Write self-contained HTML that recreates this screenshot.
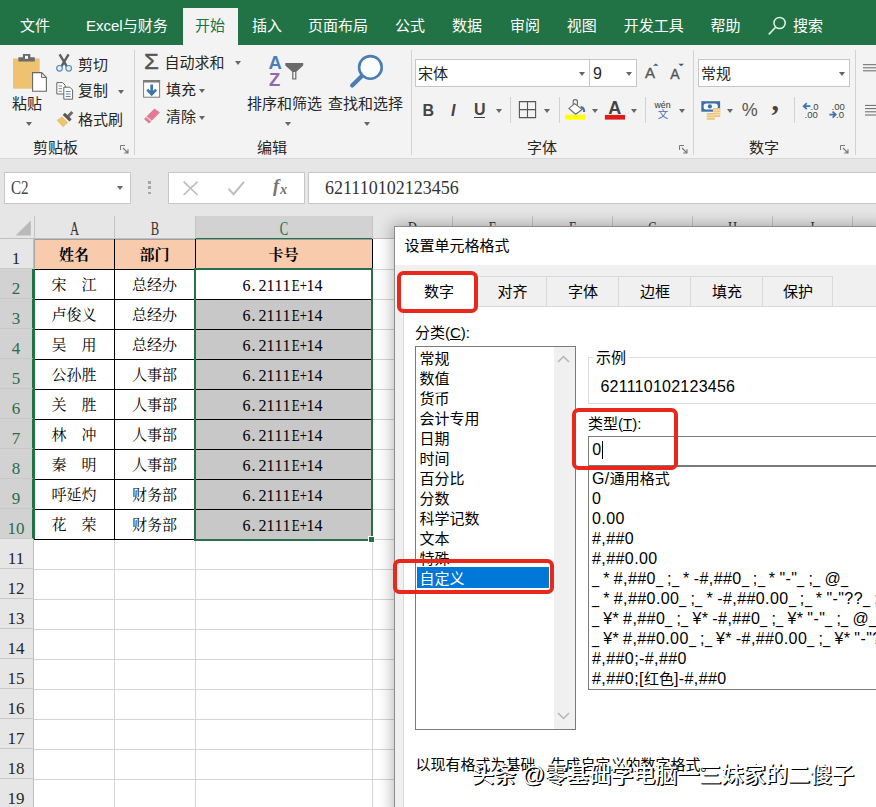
<!DOCTYPE html>
<html lang="zh-CN">
<head>
<meta charset="utf-8">
<title>Excel</title>
<style>
*{box-sizing:border-box;margin:0;padding:0}
html,body{width:876px;height:807px;overflow:hidden;background:#fff}
body{position:relative;font-family:"Liberation Sans","Noto Sans CJK SC",sans-serif;font-size:15px;color:#262626}
div,span,svg{position:absolute}
.t{white-space:nowrap;line-height:1}
svg{overflow:visible}
#tabbar{left:0;top:0;width:876px;height:45px;background:#217346}
#tabbar .t{color:#fff;font-size:15px;top:18px}
#acttab{left:183px;top:8px;width:55px;height:38px;background:#f3f3f3}
#ribbon{left:0;top:45px;width:876px;height:114px;background:#f3f3f3;border-bottom:1px solid #d8d8d8}
#ribbon .t{font-size:15px;color:#262626}
.vs{width:1px;background:#d2d2d2}
.dd{width:0;height:0;border-left:3.5px solid transparent;border-right:3.5px solid transparent;border-top:4px solid #666}
.box{background:#fff;border:1px solid #c6c6c6}
#fbar{left:0;top:159px;width:876px;height:57px;background:#e6e6e6}
#sheet{left:0;top:216px;width:876px;height:591px;background:#fff;overflow:hidden}
.ser{font-family:"Liberation Serif","Noto Serif CJK SC",serif}
.cs{font-family:"Liberation Serif","Noto Serif CJK SC",serif;font-size:15px;color:#000;text-align:center}
.mono i{display:inline-block;font-style:normal;width:8px;text-align:center}
.mono i.n{transform:scaleX(.8)}
.hl{height:1px;background:#d4d4d4}
.vl{width:1px;background:#d4d4d4}
.ch{top:0;height:23px;font-family:"Liberation Serif",serif;font-size:16px;color:#333;text-align:center;line-height:1}
.rh{left:0;width:34px;height:30px;font-family:"Liberation Serif",serif;font-size:16px;color:#262626;text-align:center;line-height:1;border-bottom:1px solid #c9c9c9}
.rh.sel{background:#d2d2d2;color:#2d6a4a;border-right:2px solid #217346}
.rh span{left:-1px;width:34px;top:11.3px;text-align:center;font-size:17px}
#dlg{left:394px;top:226px;width:490px;height:590px;background:#f0f0f0;border:1px solid #8c8c8c;box-shadow:0 0 14px 2px rgba(0,0,0,.27)}
#dlg .t{font-size:15px;color:#000}
.red{border:4px solid #e8281b;border-radius:6.5px}
.li{left:4px;white-space:nowrap;line-height:1;font-size:15px;color:#000}
.fl{left:4px;white-space:nowrap;line-height:1;font-size:16px;color:#000;letter-spacing:.42px;word-spacing:-.9px}
.fl i{display:inline-block;font-style:normal;width:7.2px;transform:scaleX(.8);transform-origin:0 50%;letter-spacing:0}
.fl b{font-weight:normal;font-size:15px;letter-spacing:0}
</style>
</head>
<body>
<div id="tabbar"><div id="acttab"></div><span class="t" style="left:20px">文件</span><span class="t" style="left:86px">Excel与财务</span><span class="t" style="left:195px;color:#217346">开始</span><span class="t" style="left:252px">插入</span><span class="t" style="left:308px">页面布局</span><span class="t" style="left:395px">公式</span><span class="t" style="left:452px">数据</span><span class="t" style="left:510px">审阅</span><span class="t" style="left:566.8px">视图</span><span class="t" style="left:623.8px">开发工具</span><span class="t" style="left:710.5px">帮助</span><span class="t" style="left:793px">搜索</span><svg style="left:766px;top:14px" width="24" height="24" viewBox="0 0 24 24"><circle cx="13.6" cy="9" r="5.6" fill="none" stroke="#e2f3e8" stroke-width="1.5"/><path d="M9.6 13.2 L2.8 20.4" stroke="#e2f3e8" stroke-width="1.6" fill="none"/></svg></div>
<div id="ribbon"><span class="t" style="left:12px;top:51.0px">粘贴</span><div class="dd" style="left:25.5px;top:76.5px"></div><span class="t" style="left:78px;top:11.799999999999997px">剪切</span><span class="t" style="left:78px;top:38.0px">复制</span><div class="dd" style="left:117.5px;top:44.5px"></div><span class="t" style="left:78px;top:66.8px">格式刷</span><span class="t" style="left:33px;top:94.9px">剪贴板</span><svg style="left:120px;top:100px" width="9" height="9" viewBox="0 0 9 9"><path d="M0.5 5 V0.5 H5" fill="none" stroke="#777" stroke-width="1"/><path d="M3 3 L7.5 7.5 M4.2 8 H8 V4.2" fill="none" stroke="#777" stroke-width="1.1"/></svg><div class="vs" style="left:134px;top:5px;height:105px"></div><span class="t" style="left:164.5px;top:10.0px">自动求和</span><div class="dd" style="left:234.5px;top:15.5px"></div><span class="t" style="left:166px;top:36.8px">填充</span><div class="dd" style="left:198.5px;top:43.5px"></div><span class="t" style="left:166px;top:64.0px">清除</span><div class="dd" style="left:198.5px;top:70.5px"></div><span class="t" style="left:247px;top:50.5px">排序和筛选</span><div class="dd" style="left:284.8px;top:76.5px"></div><span class="t" style="left:328px;top:50.5px">查找和选择</span><div class="dd" style="left:364.3px;top:76.5px"></div><span class="t" style="left:257px;top:95.0px">编辑</span><div class="vs" style="left:411px;top:5px;height:105px"></div><div class="box" style="left:415px;top:14px;width:175px;height:28px"></div><div class="box" style="left:589px;top:14px;width:48px;height:28px"></div><span class="t" style="left:418px;top:21.0px">宋体</span><div class="dd" style="left:578.5px;top:26.5px"></div><span class="t" style="left:593px;top:21.0px;font-size:16px">9</span><div class="dd" style="left:625.5px;top:26.5px"></div><span class="t" style="left:527px;top:94.9px">字体</span><svg style="left:679px;top:100px" width="9" height="9" viewBox="0 0 9 9"><path d="M0.5 5 V0.5 H5" fill="none" stroke="#777" stroke-width="1"/><path d="M3 3 L7.5 7.5 M4.2 8 H8 V4.2" fill="none" stroke="#777" stroke-width="1.1"/></svg><div class="vs" style="left:510px;top:52px;height:26px"></div><div class="vs" style="left:559px;top:52px;height:26px"></div><div class="vs" style="left:645px;top:52px;height:26px"></div><div class="dd" style="left:495.5px;top:63.5px"></div><div class="dd" style="left:543.5px;top:63.5px"></div><div class="dd" style="left:591.5px;top:63.5px"></div><div class="dd" style="left:630.5px;top:63.5px"></div><div class="dd" style="left:678.5px;top:63.5px"></div><div class="vs" style="left:693px;top:5px;height:105px"></div><div class="box" style="left:698px;top:14px;width:152px;height:28px"></div><span class="t" style="left:701px;top:21.0px">常规</span><div class="dd" style="left:838.5px;top:26.5px"></div><div class="dd" style="left:726.5px;top:63.5px"></div><span class="t" style="left:749px;top:94.9px">数字</span><svg style="left:840px;top:100px" width="9" height="9" viewBox="0 0 9 9"><path d="M0.5 5 V0.5 H5" fill="none" stroke="#777" stroke-width="1"/><path d="M3 3 L7.5 7.5 M4.2 8 H8 V4.2" fill="none" stroke="#777" stroke-width="1.1"/></svg><div class="vs" style="left:794px;top:52px;height:26px"></div><div class="vs" style="left:855px;top:5px;height:105px"></div><span class="t" style="left:144px;top:6.5px;font-size:21.5px;color:#555;-webkit-text-stroke:.45px #555;transform:scaleX(1.12);transform-origin:0 0">Σ</span><span class="t" style="left:268.4px;top:9.200000000000003px;font-size:18.5px;color:#4b7fb5;font-weight:bold">A</span><span class="t" style="left:269.1px;top:26.299999999999997px;font-size:18.5px;color:#9467ac;font-weight:bold">Z</span><span class="t" style="left:422.5px;top:57.5px;font-size:16px;color:#444;font-weight:bold">B</span><span class="t" style="left:451px;top:57.5px;font-size:16px;color:#444;font-weight:bold;font-style:italic">I</span><span class="t" style="left:474px;top:57px;font-size:16px;color:#444;font-weight:bold">U</span><div style="left:474px;top:72px;width:11px;height:1px;background:#444"></div><span class="t" style="left:608.3px;top:53.599999999999994px;font-size:18px;color:#444;font-weight:bold">A</span><span class="t" style="left:645px;top:20px;font-size:15px;color:#555;-webkit-text-stroke:.35px #555">A</span><span class="t" style="left:670.3px;top:21.5px;font-size:14px;color:#555;-webkit-text-stroke:.35px #555">A</span><span class="t" style="left:654.5px;top:55.8px;font-size:8.8px;color:#333">wén</span><span class="t" style="left:657.8px;top:64px;font-size:10.5px;color:#4472c4">文</span><span class="t" style="left:741.8px;top:55.5px;font-size:18px;color:#555">%</span><span class="t" style="left:771.5px;top:39.5px;font-size:30px;color:#444;font-weight:bold;font-family:'Liberation Serif',serif">,</span><span class="t" style="left:810.5px;top:56.5px;font-size:9.5px;color:#444">.0</span><span class="t" style="left:804.5px;top:65px;font-size:9.5px;color:#444">.00</span><span class="t" style="left:831.5px;top:56.5px;font-size:9.5px;color:#444">.00</span><span class="t" style="left:836px;top:65px;font-size:9.5px;color:#444">.0</span></div>
<svg style="left:0;top:0" width="876" height="160" viewBox="0 0 876 160"><rect x="13" y="58.5" width="26.7" height="30.2" fill="#efc271"/><path d="M18.4 61.6 V57.2 H22.9 V54 H30.3 V57.2 H34.8 V61.6 Z" fill="#6b6b6b"/><rect x="25" y="55.8" width="3" height="3" fill="#fff"/><path d="M32.6 72.6 H41.6 L46.4 77.4 V91.2 H32.6 Z" fill="#fff" stroke="#666" stroke-width="1.1"/><path d="M41.6 72.6 V77.4 H46.4" fill="none" stroke="#666" stroke-width="1"/><path d="M59.6 54.4 L66.8 66.4 M68.6 54.4 L61.4 66.4" stroke="#5f5f5f" stroke-width="2.4" fill="none"/><circle cx="59.5" cy="68.3" r="2.8" fill="#e4eef8" stroke="#5a8ab8" stroke-width="1.2"/><circle cx="68.7" cy="68.3" r="2.8" fill="#e4eef8" stroke="#5a8ab8" stroke-width="1.2"/><path d="M56.8 82.6 H62.6 L65.2 85.2 V94 H56.8 Z" fill="#fff" stroke="#666" stroke-width="1"/><path d="M58.6 86 H62 M58.6 88.6 H62 M58.6 91.2 H62" stroke="#7a8ea3" stroke-width="1"/><path d="M63.8 87.2 H69.8 L72.6 90 V99.2 H63.8 Z" fill="#fff" stroke="#666" stroke-width="1"/><path d="M65.8 91.5 H70.6 M65.8 94 H70.6 M65.8 96.5 H70.6" stroke="#5b88b5" stroke-width="1"/><path d="M72.4 112 L67.4 117" stroke="#6b6b6b" stroke-width="3" fill="none"/><path d="M63.8 113.8 L70.6 120.4" stroke="#575757" stroke-width="3.2" fill="none"/><path d="M62 116.4 L68.2 122.4 L63 127.2 L56.6 120.2 Z" fill="#ecc36f"/><rect x="143.6" y="80.6" width="16" height="16.6" fill="#fff" stroke="#7a7a7a" stroke-width="1"/><rect x="143.1" y="80.1" width="17" height="2.4" fill="#7a7a7a"/><path d="M151.7 84.4 V93.5 M147.3 89.6 L151.7 94.2 L156.1 89.6" stroke="#3b76a9" stroke-width="2.7" fill="none"/><path d="M154.4 108.4 L159.9 112.4 L149 123.4 L144 119 Z" fill="#e27c93"/><path d="M146.2 116.6 L151.4 121" stroke="#f6dbe1" stroke-width="1.1"/><path d="M285.3 63.1 H303.2 V65.4 L296.4 71.8 V79.6 H292.2 V71.8 L285.3 65.4 Z" fill="#6a6a6a"/><rect x="293.4" y="72" width="1.8" height="6.4" fill="#f3f3f3"/><circle cx="370.4" cy="67.4" r="11.3" fill="#fdfdfd" stroke="#4a7db5" stroke-width="2.6"/><path d="M361.6 76.2 L352.2 85.6" stroke="#4a7db5" stroke-width="4.2" stroke-linecap="round"/><path d="M519.4 101.6 H535.6 V117.6 H519.4 Z M527.5 101.6 V117.6 M519.4 109.6 H535.6" fill="none" stroke="#555" stroke-width="1.1"/><path d="M574.6 103.6 L582.2 109.4 L575.6 114.2 L569 108.4 Z" fill="#fff" stroke="#666" stroke-width="1.1"/><path d="M573.2 104.8 V101 Q573.2 99.6 575 99.6 Q577.4 99.6 577.4 101.4 V105.6" fill="none" stroke="#666" stroke-width="1.1"/><path d="M580.6 106 Q585.2 106 585.2 112 L583 112 Q583.6 108 580.6 108.2 Z" fill="#3f74b0"/><rect x="565.4" y="114.8" width="20" height="4.8" fill="#ffff00"/><rect x="604.9" y="114.9" width="20.1" height="4.7" fill="#e01b1b"/><path d="M653 65.8 L655.8 63.4 L658.6 65.8 Z" fill="#3b5a80"/><path d="M678.4 63.8 L684 63.8 L681.2 66.2 Z" fill="#3b5a80"/><rect x="701.3" y="101.2" width="18.8" height="10.5" fill="#3e6fa3"/><rect x="703.6" y="103.4" width="14.2" height="6.2" rx="2.6" fill="#f3f8fc"/><circle cx="709.9" cy="106.4" r="2.1" fill="#3e6fa3"/><path d="M713 108 H720.2 V117 H713 Z" fill="#ecc57c"/><path d="M706.8 113 H714.8 V119.8 H706.8 Z" fill="#ecc57c"/><path d="M713 110.2 H720.2 M713 112.4 H720.2 M714.8 114.6 H720.2 M706.8 115.2 H714.8 M706.8 117.4 H714.8" stroke="#f8e8c8" stroke-width=".8"/><path d="M810.4 106.2 H804 M806.8 103.2 L803.6 106.2 L806.8 109.2" stroke="#3f74b0" stroke-width="1.7" fill="none"/><path d="M829.4 114.6 H835.4 M832.6 111.6 L835.8 114.6 L832.6 117.6" stroke="#3f74b0" stroke-width="1.7" fill="none"/><path d="M863 64.7 H876 M863 67.8 H876 M863 70.8 H876" stroke="#666" stroke-width="1"/><path d="M865 105.4 H876 M865 108.6 H876 M865 111.8 H876 M865 115 H876" stroke="#666" stroke-width="1"/></svg>
<div id="fbar"><div class="box" style="left:4px;top:13px;width:127px;height:32px;border-color:#c8c8c8"></div><span class="t ser" style="left:11px;top:20px;font-size:18px;color:#444;transform:scaleX(.84);transform-origin:0 0">C2</span><div class="dd" style="left:117px;top:27px"></div><div style="left:148px;top:22px;width:2.5px;height:2.5px;background:#a6a6a6"></div><div style="left:148px;top:27px;width:2.5px;height:2.5px;background:#a6a6a6"></div><div style="left:148px;top:32.5px;width:2.5px;height:2.5px;background:#a6a6a6"></div><div class="box" style="left:168px;top:13px;width:137px;height:32px;border-color:#c8c8c8"></div><svg style="left:0;top:0" width="320" height="57" viewBox="0 159 320 57"><path d="M183.6 181.6 L197.6 195 M197.6 181.6 L183.6 195" stroke="#bdbdbd" stroke-width="1.6" fill="none"/><path d="M228.4 188.6 L233.6 194.2 L244 181.8" stroke="#bdbdbd" stroke-width="2" fill="none"/></svg><span class="t ser" style="left:273px;top:18px;font-size:18.5px;color:#757575;font-style:italic;font-weight:bold">f</span><span class="t ser" style="left:280px;top:23px;font-size:14.5px;color:#757575;font-style:italic;font-weight:bold">x</span><div class="box" style="left:308px;top:13px;width:580px;height:32px;border-color:#c8c8c8"></div><span class="t ser" style="left:325px;top:20px;font-size:18px;color:#333">621110102123456</span></div>
<div id="sheet"><div style="left:0;top:0;width:876px;height:23px;background:#e6e6e6;border-bottom:1px solid #bfbfbf"></div><div style="left:0;top:23px;width:34px;height:568px;background:#e6e6e6;border-right:1px solid #bfbfbf"></div><svg style="left:0;top:0" width="34" height="23" viewBox="0 0 34 23"><path d="M15.6 19.6 L30.8 4.6 V19.6 Z" fill="#b9b9b9"/></svg><div class="ch" style="left:34px;width:80px;border-left:1px solid #c4c4c4;height:23px"><span class="t" style="left:0;width:100%;top:3.8px;font-size:18px;transform:scaleX(.7)">A</span></div><div class="ch" style="left:114px;width:81px;border-left:1px solid #c4c4c4;height:23px"><span class="t" style="left:0;width:100%;top:3.8px;font-size:18px;transform:scaleX(.7)">B</span></div><div class="ch" style="left:195px;width:177px;background:#d2d2d2;color:#217346;border-bottom:2px solid #217346;border-left:1px solid #c4c4c4;height:24px"><span class="t" style="left:0;width:100%;top:3.8px;font-size:18px;transform:scaleX(.7)">C</span></div><div class="ch" style="left:372px;width:80px;border-left:1px solid #c4c4c4;height:23px"><span class="t" style="left:0;width:100%;top:3.8px;font-size:18px;transform:scaleX(.7)">D</span></div><div class="ch" style="left:452px;width:80px;border-left:1px solid #c4c4c4;height:23px"><span class="t" style="left:0;width:100%;top:3.8px;font-size:18px;transform:scaleX(.7)">E</span></div><div class="ch" style="left:532px;width:80px;border-left:1px solid #c4c4c4;height:23px"><span class="t" style="left:0;width:100%;top:3.8px;font-size:18px;transform:scaleX(.7)">F</span></div><div class="ch" style="left:612px;width:80px;border-left:1px solid #c4c4c4;height:23px"><span class="t" style="left:0;width:100%;top:3.8px;font-size:18px;transform:scaleX(.7)">G</span></div><div class="ch" style="left:692px;width:80px;border-left:1px solid #c4c4c4;height:23px"><span class="t" style="left:0;width:100%;top:3.8px;font-size:18px;transform:scaleX(.7)">H</span></div><div class="ch" style="left:772px;width:80px;border-left:1px solid #c4c4c4;height:23px"><span class="t" style="left:0;width:100%;top:3.8px;font-size:18px;transform:scaleX(.7)">I</span></div><div class="ch" style="left:852px;width:80px;border-left:1px solid #c4c4c4;height:23px"><span class="t" style="left:0;width:100%;top:3.8px;font-size:18px;transform:scaleX(.7)">J</span></div><div class="hl" style="left:34px;top:53px;width:842px"></div><div class="hl" style="left:34px;top:83px;width:842px"></div><div class="hl" style="left:34px;top:113px;width:842px"></div><div class="hl" style="left:34px;top:143px;width:842px"></div><div class="hl" style="left:34px;top:173px;width:842px"></div><div class="hl" style="left:34px;top:203px;width:842px"></div><div class="hl" style="left:34px;top:233px;width:842px"></div><div class="hl" style="left:34px;top:263px;width:842px"></div><div class="hl" style="left:34px;top:293px;width:842px"></div><div class="hl" style="left:34px;top:323px;width:842px"></div><div class="hl" style="left:34px;top:353px;width:842px"></div><div class="hl" style="left:34px;top:383px;width:842px"></div><div class="hl" style="left:34px;top:413px;width:842px"></div><div class="hl" style="left:34px;top:443px;width:842px"></div><div class="hl" style="left:34px;top:473px;width:842px"></div><div class="hl" style="left:34px;top:503px;width:842px"></div><div class="hl" style="left:34px;top:533px;width:842px"></div><div class="hl" style="left:34px;top:563px;width:842px"></div><div class="hl" style="left:34px;top:593px;width:842px"></div><div class="vl" style="left:114px;top:23px;height:568px"></div><div class="vl" style="left:195px;top:23px;height:568px"></div><div class="vl" style="left:372px;top:23px;height:568px"></div><div class="vl" style="left:452px;top:23px;height:568px"></div><div class="vl" style="left:532px;top:23px;height:568px"></div><div class="vl" style="left:612px;top:23px;height:568px"></div><div class="vl" style="left:692px;top:23px;height:568px"></div><div class="vl" style="left:772px;top:23px;height:568px"></div><div class="vl" style="left:852px;top:23px;height:568px"></div><div class="vl" style="left:932px;top:23px;height:568px"></div><div class="rh" style="top:23px"><span>1</span></div><div class="rh sel" style="top:53px"><span>2</span></div><div class="rh sel" style="top:83px"><span>3</span></div><div class="rh sel" style="top:113px"><span>4</span></div><div class="rh sel" style="top:143px"><span>5</span></div><div class="rh sel" style="top:173px"><span>6</span></div><div class="rh sel" style="top:203px"><span>7</span></div><div class="rh sel" style="top:233px"><span>8</span></div><div class="rh sel" style="top:263px"><span>9</span></div><div class="rh sel" style="top:293px"><span>10</span></div><div class="rh" style="top:323px"><span>11</span></div><div class="rh" style="top:353px"><span>12</span></div><div class="rh" style="top:383px"><span>13</span></div><div class="rh" style="top:413px"><span>14</span></div><div class="rh" style="top:443px"><span>15</span></div><div class="rh" style="top:473px"><span>16</span></div><div class="rh" style="top:503px"><span>17</span></div><div class="rh" style="top:533px"><span>18</span></div><div class="rh" style="top:563px"><span>19</span></div><div style="left:34px;top:23px;width:339px;height:31px;background:#f8cbad"></div><div style="left:195px;top:83px;width:178px;height:241px;background:#c8c8c8"></div><div style="left:34px;top:23px;width:339px;height:1px;background:#9e9e9e"></div><div style="left:34px;top:23px;width:1px;height:31px;background:#a8a8a8"></div><div style="left:34px;top:53px;width:339px;height:1px;background:#000"></div><div style="left:34px;top:83px;width:339px;height:1px;background:#000"></div><div style="left:34px;top:113px;width:339px;height:1px;background:#000"></div><div style="left:34px;top:143px;width:339px;height:1px;background:#000"></div><div style="left:34px;top:173px;width:339px;height:1px;background:#000"></div><div style="left:34px;top:203px;width:339px;height:1px;background:#000"></div><div style="left:34px;top:233px;width:339px;height:1px;background:#000"></div><div style="left:34px;top:263px;width:339px;height:1px;background:#000"></div><div style="left:34px;top:293px;width:339px;height:1px;background:#000"></div><div style="left:34px;top:323px;width:339px;height:1px;background:#000"></div><div style="left:114px;top:23px;width:1px;height:301px;background:#000"></div><div style="left:195px;top:23px;width:1px;height:301px;background:#000"></div><div style="left:372px;top:23px;width:1px;height:301px;background:#000"></div><div class="t cs" style="left:34px;width:80px;top:32px;font-weight:bold">姓名</div><div class="t cs" style="left:114px;width:81px;top:32px;font-weight:bold">部门</div><div class="t cs" style="left:195px;width:177px;top:32px;font-weight:bold">卡号</div><div class="t cs" style="left:34px;width:80px;top:62px">宋　江</div><div class="t cs" style="left:114px;width:81px;top:62px">总经办</div><div class="t cs mono" style="left:194px;width:177px;top:62px;font-size:16px"><i>6</i><i style="text-align:left;padding-left:1px">.</i><i>2</i><i>1</i><i>1</i><i>1</i><i class="n">E</i><i class="n">+</i><i>1</i><i>4</i></div><div class="t cs" style="left:34px;width:80px;top:92px">卢俊义</div><div class="t cs" style="left:114px;width:81px;top:92px">总经办</div><div class="t cs mono" style="left:194px;width:177px;top:92px;font-size:16px"><i>6</i><i style="text-align:left;padding-left:1px">.</i><i>2</i><i>1</i><i>1</i><i>1</i><i class="n">E</i><i class="n">+</i><i>1</i><i>4</i></div><div class="t cs" style="left:34px;width:80px;top:122px">吴　用</div><div class="t cs" style="left:114px;width:81px;top:122px">总经办</div><div class="t cs mono" style="left:194px;width:177px;top:122px;font-size:16px"><i>6</i><i style="text-align:left;padding-left:1px">.</i><i>2</i><i>1</i><i>1</i><i>1</i><i class="n">E</i><i class="n">+</i><i>1</i><i>4</i></div><div class="t cs" style="left:34px;width:80px;top:152px">公孙胜</div><div class="t cs" style="left:114px;width:81px;top:152px">人事部</div><div class="t cs mono" style="left:194px;width:177px;top:152px;font-size:16px"><i>6</i><i style="text-align:left;padding-left:1px">.</i><i>2</i><i>1</i><i>1</i><i>1</i><i class="n">E</i><i class="n">+</i><i>1</i><i>4</i></div><div class="t cs" style="left:34px;width:80px;top:182px">关　胜</div><div class="t cs" style="left:114px;width:81px;top:182px">人事部</div><div class="t cs mono" style="left:194px;width:177px;top:182px;font-size:16px"><i>6</i><i style="text-align:left;padding-left:1px">.</i><i>2</i><i>1</i><i>1</i><i>1</i><i class="n">E</i><i class="n">+</i><i>1</i><i>4</i></div><div class="t cs" style="left:34px;width:80px;top:212px">林　冲</div><div class="t cs" style="left:114px;width:81px;top:212px">人事部</div><div class="t cs mono" style="left:194px;width:177px;top:212px;font-size:16px"><i>6</i><i style="text-align:left;padding-left:1px">.</i><i>2</i><i>1</i><i>1</i><i>1</i><i class="n">E</i><i class="n">+</i><i>1</i><i>4</i></div><div class="t cs" style="left:34px;width:80px;top:242px">秦　明</div><div class="t cs" style="left:114px;width:81px;top:242px">人事部</div><div class="t cs mono" style="left:194px;width:177px;top:242px;font-size:16px"><i>6</i><i style="text-align:left;padding-left:1px">.</i><i>2</i><i>1</i><i>1</i><i>1</i><i class="n">E</i><i class="n">+</i><i>1</i><i>4</i></div><div class="t cs" style="left:34px;width:80px;top:272px">呼延灼</div><div class="t cs" style="left:114px;width:81px;top:272px">财务部</div><div class="t cs mono" style="left:194px;width:177px;top:272px;font-size:16px"><i>6</i><i style="text-align:left;padding-left:1px">.</i><i>2</i><i>1</i><i>1</i><i>1</i><i class="n">E</i><i class="n">+</i><i>1</i><i>4</i></div><div class="t cs" style="left:34px;width:80px;top:302px">花　荣</div><div class="t cs" style="left:114px;width:81px;top:302px">财务部</div><div class="t cs mono" style="left:194px;width:177px;top:302px;font-size:16px"><i>6</i><i style="text-align:left;padding-left:1px">.</i><i>2</i><i>1</i><i>1</i><i>1</i><i class="n">E</i><i class="n">+</i><i>1</i><i>4</i></div><div style="left:193.5px;top:52px;width:179.5px;height:272.5px;border:2px solid #26704a"></div><div style="left:33px;top:53px;width:2px;height:270px;background:#217346"></div><div style="left:368px;top:320px;width:7px;height:7px;background:#217346;border:1px solid #fff"></div></div>
<div id="dlg"><div style="left:0;top:0;width:490px;height:38px;background:#fff"></div><span class="t" style="left:9.5px;top:11px">设置单元格格式</span><div style="left:8px;top:79px;width:500px;height:520px;background:#fff;border:1px solid #d9d9d9"></div><div style="left:82px;top:49px;width:70px;height:31px;border:1px solid #d9d9d9;background:#f0f0f0"></div><span class="t" style="left:102.5px;top:57px">对齐</span><div style="left:151px;top:49px;width:73px;height:31px;border:1px solid #d9d9d9;background:#f0f0f0"></div><span class="t" style="left:173.0px;top:57px">字体</span><div style="left:223px;top:49px;width:73px;height:31px;border:1px solid #d9d9d9;background:#f0f0f0"></div><span class="t" style="left:245.0px;top:57px">边框</span><div style="left:295px;top:49px;width:73px;height:31px;border:1px solid #d9d9d9;background:#f0f0f0"></div><span class="t" style="left:317.0px;top:57px">填充</span><div style="left:367px;top:49px;width:71px;height:31px;border:1px solid #d9d9d9;background:#f0f0f0"></div><span class="t" style="left:388.0px;top:57px">保护</span><div style="left:5px;top:46px;width:77px;height:35px;background:#fff;border:1px solid #d9d9d9;border-bottom:none"></div><span class="t" style="left:29px;top:56.5px">数字</span><div class="red" style="left:2px;top:43.69999999999999px;width:81px;height:42.3px"></div><span class="t" style="left:20px;top:97.5px">分类(<u>C</u>):</span><div style="left:20px;top:119px;width:161px;height:384px;background:#fff;border:1px solid #7a7a7a"></div><div style="left:159px;top:120px;width:21px;height:382px;background:#f0f0f0"></div><svg style="left:162px;top:128px" width="13" height="8" viewBox="0 0 13 8"><path d="M1 7 L6.5 1.5 L12 7" fill="none" stroke="#b5b5b5" stroke-width="1.5"/></svg><svg style="left:162px;top:485px" width="13" height="8" viewBox="0 0 13 8"><path d="M1 1 L6.5 6.5 L12 1" fill="none" stroke="#b5b5b5" stroke-width="1.5"/></svg><div style="left:22px;top:340px;width:132px;height:21px;background:#0078d7"></div><span class="li" style="left:24.5px;top:124.0px">常规</span><span class="li" style="left:24.5px;top:144.0px">数值</span><span class="li" style="left:24.5px;top:164.0px">货币</span><span class="li" style="left:24.5px;top:184.0px">会计专用</span><span class="li" style="left:24.5px;top:204.0px">日期</span><span class="li" style="left:24.5px;top:224.0px">时间</span><span class="li" style="left:24.5px;top:244.0px">百分比</span><span class="li" style="left:24.5px;top:264.0px">分数</span><span class="li" style="left:24.5px;top:284.0px">科学记数</span><span class="li" style="left:24.5px;top:304.0px">文本</span><span class="li" style="left:24.5px;top:324.0px">特殊</span><span class="li" style="left:24.5px;top:344.0px;color:#fff">自定义</span><div class="red" style="left:-1.6999999999999886px;top:331.70000000000005px;width:160.3px;height:35.3px"></div><div style="left:193px;top:129.5px;width:300px;height:47px;border:1px solid #dcdcdc"></div><span class="t" style="left:198px;top:122.5px;background:#fff;padding:0 3px">示例</span><span class="t" style="left:205.39999999999998px;top:151.5px;font-size:16px;letter-spacing:.25px">621110102123456</span><span class="t" style="left:193px;top:188.5px">类型(<u>T</u>):</span><div style="left:193px;top:209px;width:300px;height:30px;background:#fff;border:1px solid #7a7a7a"></div><span class="t" style="left:197.29999999999995px;top:215px;font-size:16px">0</span><div style="left:206.5px;top:214px;width:1px;height:18px;background:#000"></div><div style="left:193px;top:239px;width:300px;height:224px;background:#fff;border:1px solid #7a7a7a"></div><span class="fl" style="left:197px;top:244px">G/<b>通用格式</b></span><span class="fl" style="left:197px;top:264px">0</span><span class="fl" style="left:197px;top:284px">0.00</span><span class="fl" style="left:197px;top:304px">#,##0</span><span class="fl" style="left:197px;top:324px">#,##0.00</span><span class="fl" style="left:197px;top:344px"><i>_</i> * #,##0<i>_</i> ;<i>_</i> * -#,##0<i>_</i> ;<i>_</i> * &quot;-&quot;<i>_</i> ;<i>_</i> @<i>_</i> </span><span class="fl" style="left:197px;top:364px"><i>_</i> * #,##0.00<i>_</i> ;<i>_</i> * -#,##0.00<i>_</i> ;<i>_</i> * &quot;-&quot;??<i>_</i> ;<i>_</i> @<i>_</i> </span><span class="fl" style="left:197px;top:384px"><i>_</i> ¥* #,##0<i>_</i> ;<i>_</i> ¥* -#,##0<i>_</i> ;<i>_</i> ¥* &quot;-&quot;<i>_</i> ;<i>_</i> @<i>_</i> </span><span class="fl" style="left:197px;top:404px"><i>_</i> ¥* #,##0.00<i>_</i> ;<i>_</i> ¥* -#,##0.00<i>_</i> ;<i>_</i> ¥* &quot;-&quot;??<i>_</i> ;<i>_</i> @<i>_</i> </span><span class="fl" style="left:197px;top:424px">#,##0;-#,##0</span><span class="fl" style="left:197px;top:444px">#,##0;[<b>红色</b>]-#,##0</span><div class="red" style="left:176.5px;top:181px;width:106.8px;height:61.5px"></div><span class="t" style="left:20.5px;top:530px">以现有格式为基础，生成自定义的数字格式。</span></div>
<span class="t" style="left:472px;top:763.5px;font-size:22.1px;font-weight:500;color:#fff;text-shadow:1.35px 1.35px .5px #000,.7px .7px 0 #000">头条 @零基础学电脑一三妹家的二傻子</span></body>
</html>
